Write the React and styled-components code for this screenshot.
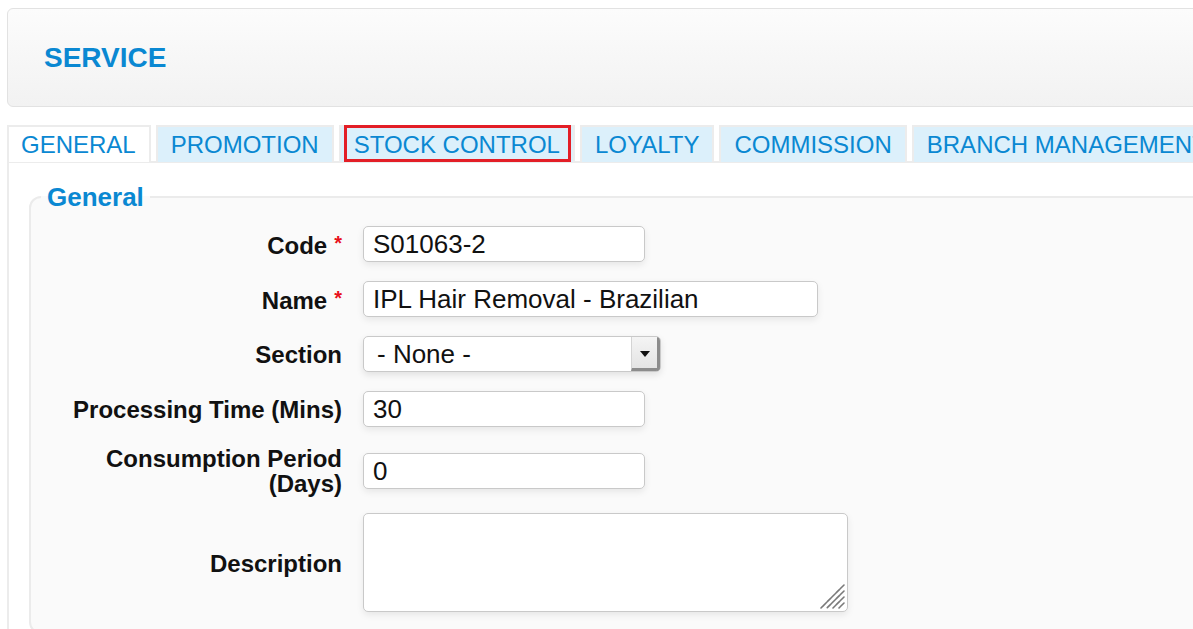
import React from "react";
import styled, { createGlobalStyle } from "styled-components";

const GlobalStyle = createGlobalStyle`
  html, body {
    margin: 0;
    padding: 0;
    overflow: hidden;
    background: #fff;
    font-family: "Liberation Sans", Arial, sans-serif;
  }
`;

const BLUE = "#0a88d2";

const Page = styled.div`
  width: 1240px;
  padding: 8px 0 0 7px;
`;

const Header = styled.div`
  height: 97px;
  display: flex;
  align-items: center;
  padding-left: 36px;
  border: 1px solid #e2e2e2;
  border-radius: 6px;
  background: linear-gradient(#fcfcfc, #f2f2f2);
`;

const Title = styled.h1`
  margin: 0;
  font-size: 28px;
  font-weight: bold;
  color: ${BLUE};
`;

const TabBar = styled.div`
  display: flex;
  margin-top: 18px;
  height: 37px;
`;

const Tab = styled.div`
  position: relative;
  display: flex;
  align-items: center;
  padding: 0 13px 0 12px;
  margin-right: 5px;
  border: 2px solid #ececec;
  border-bottom: none;
  background: ${(p) => (p.$active ? "#fff" : "#dcf0fb")};
  color: ${BLUE};
  font-size: 24px;
  white-space: nowrap;

  & + & {
    padding-left: 13px;
  }

  ${(p) =>
    p.$marked &&
    `
    &::after {
      content: "";
      position: absolute;
      left: 3px;
      right: 2px;
      top: -2px;
      bottom: 0;
      border: 3px solid #e31e26;
    }
  `}
`;

const Panel = styled.div`
  border-left: 2px solid #ececec;
  border-top: 2px solid #ececec;
  padding: 20px 0 30px 20px;
  margin-top: -1px;
`;

const Fieldset = styled.fieldset`
  margin: 0;
  padding: 15px 0 20px 0;
  border: 2px solid #ebebeb;
  border-radius: 12px;
  background: #fafafa;
`;

const Legend = styled.legend`
  margin-left: 10px;
  padding: 0 6px;
  font-size: 26px;
  line-height: 28px;
  font-weight: bold;
  color: ${BLUE};
`;

const Form = styled.div`
  display: grid;
  grid-template-columns: 311px auto;
  column-gap: 21px;
  row-gap: 19px;
  align-items: center;
  justify-items: start;
`;

const Label = styled.label`
  justify-self: end;
  text-align: right;
  font-size: 24px;
  line-height: 25px;
  font-weight: bold;
  color: #111;
`;

const Req = styled.span`
  color: #e8101a;
  font-size: 20px;
  vertical-align: 4px;
  margin-left: 7px;
`;

const fieldBase = `
  box-sizing: border-box;
  border: 1px solid #c9c9c9;
  border-radius: 5px;
  background: #fff;
  box-shadow: 0 3px 7px rgba(0, 0, 0, 0.08);
  font-family: "Liberation Sans", Arial, sans-serif;
  font-size: 26px;
  color: #111;
`;

const Input = styled.input`
  ${fieldBase}
  width: ${(p) => p.$w}px;
  height: 36px;
  padding: 0 9px;
  outline: none;
`;

const Select = styled.div`
  ${fieldBase}
  width: 298px;
  height: 36px;
  display: flex;
  align-items: center;
  overflow: hidden;
  box-shadow: 0 3px 7px rgba(0, 0, 0, 0.1);
`;

const SelectText = styled.span`
  flex: 1;
  padding-left: 13px;
`;

const SelectButton = styled.span`
  width: 29px;
  align-self: stretch;
  display: flex;
  align-items: center;
  justify-content: center;
  background: linear-gradient(#f4f4f4, #e4e4e4);
  border-left: 1px solid #d4d4d4;
  border-right: 3px solid #8c8c8c;
  border-bottom: 3px solid #8c8c8c;
  box-sizing: border-box;
`;

const Arrow = styled.span`
  width: 0;
  height: 0;
  border-left: 5px solid transparent;
  border-right: 5px solid transparent;
  border-top: 6px solid #111;
  margin-top: 2px;
`;

const AreaWrap = styled.div`
  position: relative;
  display: flex;
  margin-top: -2px;
`;

const TextArea = styled.textarea`
  ${fieldBase}
  width: 485px;
  height: 99px;
  padding: 6px 9px;
  resize: none;
  outline: none;
`;

const Grip = styled.svg`
  position: absolute;
  right: 3px;
  bottom: 3px;
  pointer-events: none;
`;

const tabs = ["GENERAL", "PROMOTION", "STOCK CONTROL", "LOYALTY", "COMMISSION", "BRANCH MANAGEMENT"];

export default function App() {
  return (
    <>
      <GlobalStyle />
      <Page>
        <Header>
          <Title>SERVICE</Title>
        </Header>
        <TabBar>
          {tabs.map((t, i) => (
            <Tab key={t} $active={i === 0} $marked={t === "STOCK CONTROL"}>
              {t}
            </Tab>
          ))}
        </TabBar>
        <Panel>
          <Fieldset>
            <Legend>General</Legend>
            <Form>
              <Label>
                Code<Req>*</Req>
              </Label>
              <Input $w={282} defaultValue="S01063-2" />

              <Label>
                Name<Req>*</Req>
              </Label>
              <Input $w={455} defaultValue="IPL Hair Removal - Brazilian" />

              <Label>Section</Label>
              <Select>
                <SelectText>- None -</SelectText>
                <SelectButton>
                  <Arrow />
                </SelectButton>
              </Select>

              <Label>Processing Time (Mins)</Label>
              <Input $w={282} defaultValue="30" />

              <Label>
                Consumption Period
                <br />
                (Days)
              </Label>
              <Input $w={282} defaultValue="0" />

              <Label>Description</Label>
              <AreaWrap>
                <TextArea />
                <Grip width="25" height="25" viewBox="0 0 25 25">
                  <g stroke="#7a7a7a" strokeWidth="1.6" strokeLinecap="round" strokeDasharray="5 1.2">
                    <line x1="24" y1="1" x2="1" y2="24" />
                    <line x1="24" y1="7" x2="7" y2="24" />
                    <line x1="24" y1="13" x2="13" y2="24" />
                    <line x1="24" y1="19" x2="19" y2="24" />
                  </g>
                </Grip>
              </AreaWrap>
            </Form>
          </Fieldset>
        </Panel>
      </Page>
    </>
  );
}
